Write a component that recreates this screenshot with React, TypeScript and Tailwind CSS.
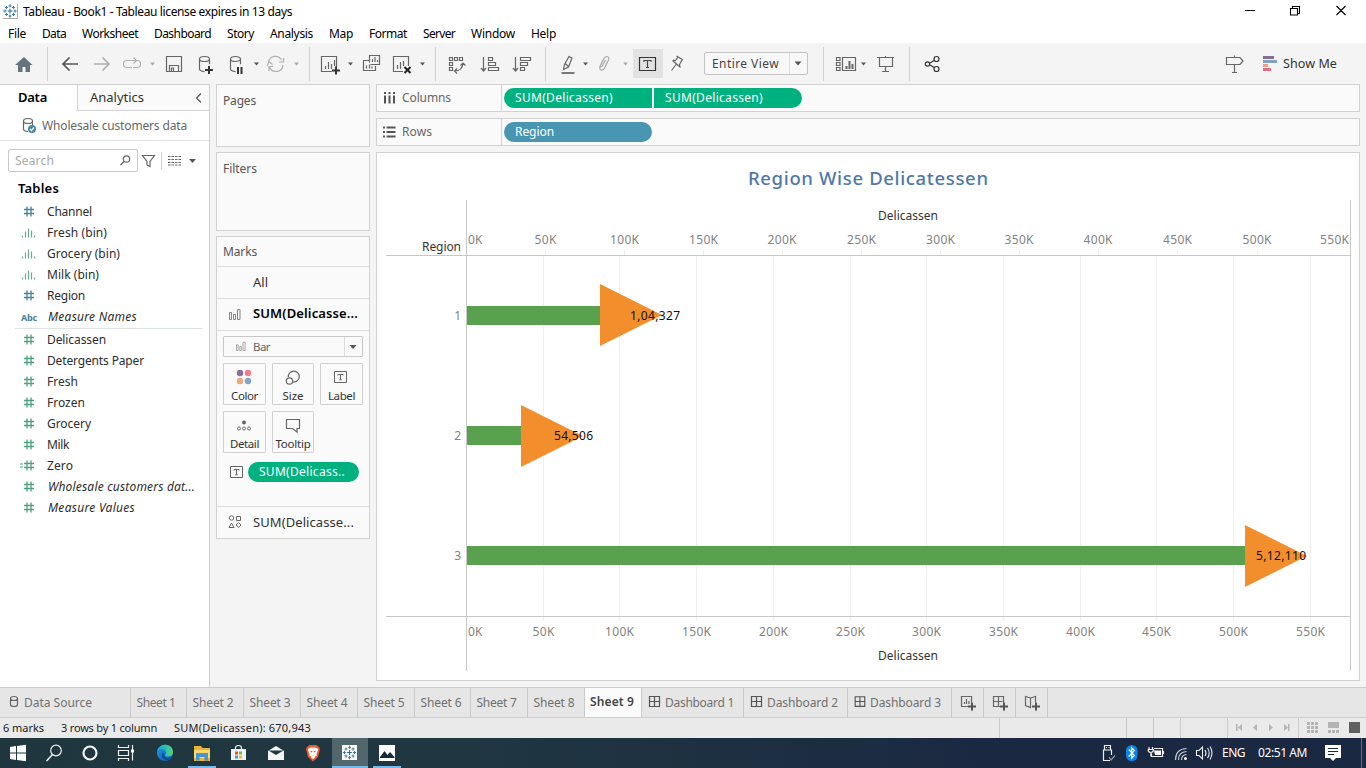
import { useLayoutEffect, useRef } from "react";
import type { ReactNode } from "react";

/** Single-line text whose tracking is adjusted to occupy a given width. */
function T({ w, c = "", children }: { w: number; c?: string; children: string }) {
  const ref = useRef<HTMLSpanElement>(null);
  useLayoutEffect(() => {
    const el = ref.current;
    if (!el) return;
    el.style.letterSpacing = "0px";
    const natural = el.getBoundingClientRect().width;
    el.style.letterSpacing = `${(w - natural) / children.length}px`;
  }, [w, children]);
  return (
    <span ref={ref} className={`inline-block shrink-0 whitespace-pre ${c}`}>
      {children}
    </span>
  );
}

/** Drawing surface using window coordinates, so neighbouring cells line up. */
function Ico({ x, y, w, h, c = "", children }: { x: number; y: number; w: number; h: number; c?: string; children?: ReactNode }) {
  return (
    <svg width={w} height={h} viewBox={`${x} ${y} ${w} ${h}`} fill="none" stroke="#666" strokeWidth="1.2" className={`block shrink-0 ${c}`}>
      {children}
    </svg>
  );
}

const Tool = ({ x, w, children }: { x: number; w: number; children?: ReactNode }) => (
  <Ico x={x} y={43} w={w} h={41}>
    {children}
  </Ico>
);
const Caret = ({ x, y = 62.5, f = "#555", s = 2.5 }: { x: number; y?: number; f?: string; s?: number }) => (
  <path d={`M${x - s} ${y}h${s * 2}l${-s} ${s + 0.5}z`} fill={f} stroke="none" />
);
const Plus = ({ x, y, f = "#333" }: { x: number; y: number; f?: string }) => (
  <path d={`M${x - 4} ${y}h8M${x} ${y - 4}v8`} stroke={f} strokeWidth="2" />
);
const Divider = ({ x }: { x: number }) => <path d={`M${x + 0.5} 47v34`} stroke="#d0d0d0" strokeWidth="1" />;

function Cylinder({ x, y, w, h }: { x: number; y: number; w: number; h: number }) {
  const r = w / 2;
  return (
    <path
      d={`M${x} ${y + 2.5}a${r} 2.5 0 0 1 ${w} 0a${r} 2.5 0 0 1 ${-w} 0v${h - 5}q0 2 ${r} 2.6M${x + w} ${y + 2.5}v${h * 0.35}`}
    />
  );
}

const TableauMark = ({ cx, cy, s }: { cx: number; cy: number; s: number }) => (
  <g transform={`translate(${cx} ${cy}) scale(${s})`} stroke="#3d7fa6" strokeWidth="1.1">
    <path d="M-2.5 0h5M0-2.5v5" stroke="#2d6a92" />
    <path d="M-1.5-5.3h3M0-7v3.4M-1.5 5.3h3M0 3.6V7M-5.3-1.5v3M-7 0h3.4M5.3-1.5v3M3.6 0H7" />
    <path d="M-5.3-3.7h3.2M-3.7-5.3v3.2M2.1-3.7h3.2M3.7-5.3v3.2M-5.3 3.7h3.2M-3.7 2.1v3.2M2.1 3.7h3.2M3.7 2.1v3.2" />
  </g>
);

const menus: [string, number, number][] = [
  ["File", 8, 18], ["Data", 42, 24], ["Worksheet", 82, 56], ["Dashboard", 154, 57], ["Story", 227, 27], ["Analysis", 270, 43],
  ["Map", 329, 24], ["Format", 369, 38], ["Server", 423, 32], ["Window", 471, 44], ["Help", 531, 25],
];

function TitleBar() {
  return (
    <div className="flex h-[22px] items-center bg-white">
      <Ico x={0} y={0} w={23} h={22}>
        <rect x="3" y="4" width="14" height="14" fill="#fff" stroke="none" />
        <path d="M17.5 4v14.5H3" stroke="#aaa" strokeWidth="1" />
        <TableauMark cx={10} cy={11} s={0.95} />
      </Ico>
      <T w={269} c="mt-[2px] font-['Noto_Sans'] text-[12px] leading-[22px] text-black">Tableau - Book1 - Tableau license expires in 13 days</T>
      <div className="flex-1" />
      <Ico x={1230} y={0} w={136} h={22}>
        <path d="M1245 10.5h10M1290.5 8.5h7v6.500h-7zM1292.500 8.500v-2h7v7h-2M1336.500 6l9 9M1345.500 6l-9 9" stroke="#000" strokeWidth="1.1" />
      </Ico>
    </div>
  );
}

function MenuBar() {
  return (
    <div className="flex h-[21px] items-start bg-white pt-px pl-2 font-['Noto_Sans'] text-[12px] text-black">
      {menus.map(([m, x, w], i) => (
        <div key={m} className="flex shrink-0" style={{ width: (menus[i + 1]?.[1] ?? x + 40) - x }}>
          <T w={w} c="leading-[21px]">{m}</T>
        </div>
      ))}
    </div>
  );
}

function Toolbar() {
  return (
    <div className="flex h-[41px] items-center bg-[#f4f4f4]">
      <Tool x={0} w={48}>
        <path d="M15 65l9-8 8.500 8h-2.500v7h-4.500v-5h-3v5H18v-7z" fill="#667482" stroke="none" />
        <Divider x={47} />
      </Tool>
      <Tool x={48} w={112}>
        <path d="M78 64H63M69.500 57.500L63 64l6.500 6.500" stroke="#555" strokeWidth="1.700" />
        <path d="M94 64h15M102.500 57.500L109 64l-6.500 6.500" stroke="#b0b0b0" strokeWidth="1.700" />
        <path d="M133 67.500h4a3.500 3.500 0 0 0 0-7M137 60.500h-10a3.500 3.500 0 0 0 0 7h5M133.500 57.500l3 3-3 3" stroke="#b0b0b0" />
        <Caret x={152.500} f="#aaa" />
      </Tool>
      <Tool x={160} w={30}>
        <path d="M166.500 56.500h15v15h-15zM169.500 71v-5.500h9V71M171.500 71v-3h2v3" />
      </Tool>
      <Tool x={190} w={120}>
        <Cylinder x={199.500} y={56.500} w={10} h={15} />
        <Plus x={209} y={70} />
        <Cylinder x={230.500} y={56.500} w={10} h={15} />
        <path d="M238 67v7M241.500 67v7" stroke="#333" strokeWidth="2" />
        <Caret x={256.500} />
        <path d="M268.500 62a7 7 0 0 1 13-2M283 65a7 7 0 0 1-13.500 2M267 66l2-4.500 3.500 3M279 62l4.500 0v-4M269 71v-4.500h4" stroke="#b0b0b0" />
        <Caret x={296.500} f="#aaa" />
        <Divider x={309} />
      </Tool>
      <Tool x={310} w={126}>
        <path d="M332 71.500h-10.500v-15h15V67M325.500 69v-3M328.500 69v-7M331.500 69v-5M334.500 66v-6" />
        <Plus x={336} y={70.500} />
        <Caret x={350.500} />
        <path d="M369.500 62.500v-7h10v9h-9M372.500 62v-3M375 62v-5M377.500 62v-2M369 60.500h-5.500v10h12v-4.500M366.500 68.500v-3M369.500 68.500v-4M372 68.500v-2" />
        <path d="M403 71.500h-9.500v-15h15V66M397.500 69v-4M400.500 69v-7M403.500 66v-5" />
        <path d="M404.500 67l6 6M410.500 67l-6 6" stroke="#222" strokeWidth="2" />
        <Caret x={422.500} />
        <Divider x={435} />
      </Tool>
      <Tool x={436} w={110}>
        <path d="M449.500 57.500h3v3h-3zM454.500 57.500h3v3h-3zM459.500 57.500h3v3h-3zM449.500 62.500h3v3h-3zM449.500 67.500h3v3h-3zM454.500 71q8 0 8.500-8M457 68.500l-2.500 2.500 2.500 2.500M460.500 65.500l2.500-2.500 2.500 2.500" />
        <path d="M483.500 57v13M481 68l2.500 3 2.500-3M488.500 57.500h4v3h-4zM488.500 62.500h7v3h-7zM488.500 67.500h10v3h-10z" />
        <path d="M515.500 57v13M513 68l2.500 3 2.500-3M520.500 57.500h10v3h-10zM520.500 62.500h7v3h-7zM520.500 67.500h4v3h-4z" />
        <Divider x={545} />
      </Tool>
      <Tool x={546} w={87}>
        <path d="M561.500 73h13" stroke="#777" strokeWidth="2" />
        <path d="M569 56.500l3 1.500-3.500 9-5 2.500 1-5zM565 63.500l3.500 3" />
        <Caret x={585.500} />
        <path d="M603 60l-3 6.500q-1 4 2.500 3.500 1.500-.5 2-2l4-8q1-3-1.500-3.500-2 0-3 2l-3.500 7q0 1.500 1 1 .8-.3 1-1l3-5.500" stroke="#aaa" />
        <Caret x={625.500} f="#aaa" />
      </Tool>
      <div className="flex h-[29px] w-[30px] shrink-0 bg-[#e2e2e2]">
        <Ico x={633} y={49} w={30} h={29}>
          <path d="M639.500 57.500h16v13h-16z" stroke="#333" />
          <path d="M644 62v-1.500h7V62M647.500 61v6.500M646 67.500h3" stroke="#444" />
        </Ico>
      </div>
      <Tool x={663} w={41}>
        <path d="M676.500 56l6.500 4M678 57l-2.500 3.500-2.500-.5M682 60l-2.500 4.500 .5 2.500M672.500 60.500l8 7M676 64.500l-4.500 6" />
      </Tool>
      <div className="flex h-[23px] w-[104px] shrink-0 items-center rounded-[2px] border border-[#c4c4c4] bg-[#f8f8f8] pl-[7px]">
        <T w={67} c="font-['Noto_Sans'] text-[12px] text-[#444]">Entire View</T>
        <div className="ml-[10px] flex h-full border-l border-[#ddd]">
          <Ico x={790} y={53} w={16} h={21}><Caret x={798} y={61.500} s={3.500} /></Ico>
        </div>
      </div>
      <Tool x={808} w={102}>
        <Divider x={823} />
        <path d="M836.500 57.500h3.500v3h-3.500zM836.500 62.500h3.500v3h-3.500zM836.500 67.500h3.500v3h-3.500zM842.500 57.500h13v13h-13z" />
        <path d="M846.500 69v-3M849.500 69v-8M852.500 69v-5" strokeWidth="2" />
        <Caret x={863.500} />
        <path d="M877 57.500h17M879.500 58v8.500h13V58M885.500 56v1M885.500 66.500V71M882 71.500h7" />
        <Divider x={909} />
      </Tool>
      <Tool x={910} w={40}>
        <g stroke="#333"><circle cx="927.500" cy="64" r="2.200" /><circle cx="936.500" cy="59" r="2.500" /><circle cx="936.500" cy="69" r="2.500" /><path d="M930 63l4-2.500M930 65l4 2.500" /></g>
      </Tool>
      <div className="flex-1" />
      <Tool x={1220} w={63}>
        <path d="M1226.500 57.500h13.500l3 3.500-3 3.500h-13.500zM1234.500 55.500v2M1234.500 64.500v7.500M1232 72.500h5" />
        <g stroke="none"><path d="M1263 56h11v3h-11z" fill="#846e94" /><path d="M1263 60h14v3h-14z" fill="#83a0c0" /><path d="M1263 64h5v3h-5z" fill="#eda27e" /><path d="M1263 68h8v3h-8z" fill="#e46c82" /></g>
      </Tool>
      <T w={54} c="mt-[2px] mr-[29px] font-['Noto_Sans'] text-[12.5px] text-[#333]">Show Me</T>
    </div>
  );
}

type Field = { k: "hash" | "bin" | "abc" | "calc"; n: string; w: number; dim?: boolean; it?: boolean };
const dims: Field[] = [
  { k: "hash", n: "Channel", w: 45, dim: true },
  { k: "bin", n: "Fresh (bin)", w: 60 },
  { k: "bin", n: "Grocery (bin)", w: 73 },
  { k: "bin", n: "Milk (bin)", w: 52 },
  { k: "hash", n: "Region", w: 38, dim: true },
  { k: "abc", n: "Measure Names", w: 90, it: true },
];
const measures: Field[] = [
  { k: "hash", n: "Delicassen", w: 59 },
  { k: "hash", n: "Detergents Paper", w: 97 },
  { k: "hash", n: "Fresh", w: 31 },
  { k: "hash", n: "Frozen", w: 38 },
  { k: "hash", n: "Grocery", w: 44 },
  { k: "hash", n: "Milk", w: 22 },
  { k: "calc", n: "Zero", w: 26 },
  { k: "hash", n: "Wholesale customers dat...", w: 148, it: true },
  { k: "hash", n: "Measure Values", w: 88, it: true },
];

function FieldRow({ f }: { f: Field }) {
  const col = f.dim ? "#4a8299" : "#4f9f80";
  return (
    <div className="flex h-[21px] items-center">
      {f.k === "abc" ? (
        <span className="flex w-[47px] pl-[21px]"><T w={16} c="mt-[2px] font-['Noto_Sans'] text-[9px] font-bold text-[#4a7d94]">Abc</T></span>
      ) : (
        <Ico x={0} y={0} w={47} h={21}>
          {f.k === "bin" ? (
            <path d="M22.500 15.500v-2M25.500 15.500v-6M28.500 15.500v-9M31.500 15.500v-7M34.500 15.500v-2" stroke="#68aa90" strokeWidth="1.200" />
          ) : (
            <path d="M24 8.500h10M24 12.500h10M27 5.500v10M31 5.500v10" stroke={col} strokeWidth="1.300" />
          )}
          {f.k === "calc" && <path d="M20 9h3M20 12h3" stroke={col} strokeWidth="1" />}
        </Ico>
      )}
      <T w={f.w} c={f.it ? "pl-px text-[12px] leading-[21px] italic" : "text-[12px] leading-[21px]"}>{f.n}</T>
    </div>
  );
}

function DataPane() {
  return (
    <div className="flex w-[210px] shrink-0 flex-col border-t border-r border-[#d0d0d0] bg-white font-['Noto_Sans'] text-[#2d2d2d]">
      <div className="flex h-[26px] shrink-0">
        <div className="flex w-[77px] items-center pl-[18px]"><T w={29} c="text-[13px] font-semibold text-black">Data</T></div>
        <div className="flex flex-1 items-center border-b border-l border-[#d4d4d4] bg-[#fafafa] pl-[12px]">
          <T w={54} c="text-[13px] text-[#333]">Analytics</T>
          <div className="flex-1" />
          <Ico x={190} y={86} w={19} h={22}><path d="M201 92.500l-4.500 4.500 4.500 4.500" stroke="#555" /></Ico>
        </div>
      </div>
      <div className="flex h-[30px] shrink-0 items-center border-b border-[#e0e0e0]">
        <Ico x={0} y={111} w={42} h={29}>
          <Cylinder x={23.500} y={118.500} w={9} h={13} />
          <circle cx="32" cy="129" r="4" fill="#4388a8" stroke="none" />
          <path d="M30 129l1.500 1.500 2.500-3" stroke="#fff" />
        </Ico>
        <T w={145} c="text-[12px] text-[#666]">Wholesale customers data</T>
      </div>
      <div className="flex h-[39px] shrink-0 items-center pl-2">
        <div className="flex h-[23px] w-[130px] items-center rounded-[2px] border border-[#c8c8c8] pl-[6px]">
          <T w={39} c="mt-px text-[12px] text-[#aaa]">Search</T>
          <div className="flex-1" />
          <Ico x={118} y={150} w={19} h={21}><circle cx="126.500" cy="159" r="3.200" /><path d="M124 161.500l-3.500 3.500" strokeWidth="1.500" /></Ico>
        </div>
        <Ico x={138} y={149} w={70} h={22}>
          <path d="M142.500 154.500h12l-4.500 6v5l-3-1.500v-3.500z" />
          <path d="M161.500 151v17" stroke="#ccc" strokeWidth="1" />
          <path d="M168 155.500h13M168 158.500h13M168 161.500h13M168 164h13" strokeDasharray="2.500 1" />
          <Caret x={192.500} y={158} s={3.500} />
        </Ico>
      </div>
      <div className="flex h-[21px] shrink-0 items-center pl-[18px]"><T w={41} c="mt-[-3px] text-[13px] font-semibold text-black">Tables</T></div>
      {dims.map((f) => <FieldRow key={f.n} f={f} />)}
      <div className="mr-[6px] ml-[15px] h-[2px] border-b border-[#dde3e0]" />
      {measures.map((f) => <FieldRow key={f.n} f={f} />)}
    </div>
  );
}

const BarsGlyph = ({ x, y, s = "#888" }: { x: number; y: number; s?: string }) => (
  <path d={`M${x} ${y - 7}h2v7h-2zM${x + 4} ${y - 5}h2v5h-2zM${x + 8} ${y - 10}h2.500v10h-2.500z`} stroke={s} strokeWidth="1" />
);
const LabelGlyph = ({ x, y }: { x: number; y: number }) => (
  <path d={`M${x} ${y}h12v11h-12zM${x + 3.5} ${y + 4}v-1h5v1M${x + 6} ${y + 3}v5M${x + 4.8} ${y + 8.300}h2.500`} strokeWidth="1" />
);

function MarkButton({ n, w, wide, children }: { n: string; w: number; wide?: boolean; children: ReactNode }) {
  return (
    <div className={`flex h-[42px] flex-col items-center rounded-[1px] border border-[#d0d0d0] bg-[#fafafa] ${wide ? "w-[43px]" : "w-[42px]"}`}>
      <svg width={wide ? 41 : 40} height="24" viewBox={wide ? "0.5 0 41 24" : "0 0 40 24"} fill="none" stroke="#666" strokeWidth="1.2" className="shrink-0">{children}</svg>
      <T w={w} c="text-[11.5px] leading-[16px] text-[#333]">{n}</T>
    </div>
  );
}

function Cards() {
  const card = "flex flex-col border border-[#d2d2d2] bg-[#fafafa]";
  return (
    <div className="ml-[6px] flex w-[154px] shrink-0 flex-col gap-[5px] font-['Noto_Sans'] text-[#555]">
      <div className={`${card} h-[63px] items-start pt-[6px] pl-[6px]`}><T w={33} c="text-[12px] leading-[19px]">Pages</T></div>
      <div className={`${card} h-[79px] items-start pt-[6px] pl-[6px]`}><T w={34} c="text-[12px] leading-[19px]">Filters</T></div>
      <div className={`${card} h-[303px]`}>
        <div className="flex h-[30px] items-center border-b border-[#ddd] pl-[6px]"><T w={34} c="text-[12px]">Marks</T></div>
        <div className="flex h-[32px] items-center border-b border-[#ddd] pl-[36px]"><T w={15} c="text-[13px] text-[#333]">All</T></div>
        <div className="flex h-[32px] items-center border-b border-[#ddd]">
          <Ico x={217} y={299} w={36} h={31}><BarsGlyph x={229.500} y={319.500} /></Ico>
          <T w={105} c="mt-[-2px] text-[13px] font-semibold text-black">SUM(Delicasse...</T>
        </div>
        <div className="flex h-[176px] flex-col border-b border-[#ddd] px-[6px] pt-[5px]">
          <div className="flex h-[21px] w-[140px] items-center rounded-[1px] border border-[#c8c8c8]">
            <Ico x={224} y={337} w={29} h={19}><g transform="translate(236.500 350.500) scale(.82)"><BarsGlyph x={0} y={0} s="#999" /></g></Ico>
            <T w={17} c="text-[11.5px] text-[#666]">Bar</T>
            <div className="flex-1" />
            <Ico x={344} y={337} w={18} h={19}><path d="M344.500 337v20" stroke="#ddd" strokeWidth="1" /><Caret x={353} y={345} s={3.500} /></Ico>
          </div>
          <div className="mt-[6px] flex gap-x-[6px]">
            <MarkButton wide n="Color" w={27}>
              <g stroke="none"><circle cx="16.500" cy="9" r="3.200" fill="#87709a" /><circle cx="24.500" cy="9" r="3.200" fill="#f47c88" /><circle cx="16.500" cy="17" r="3.200" fill="#eda67d" /><circle cx="24.500" cy="17" r="3.200" fill="#82a5c6" /></g>
            </MarkButton>
            <MarkButton n="Size" w={21}><path d="M15.300 13a5.500 5.500 0 1 1 4.700 5" /><circle cx="16.500" cy="17" r="3.200" /></MarkButton>
            <MarkButton wide n="Label" w={27}><LabelGlyph x={14} y={7.500} /></MarkButton>
          </div>
          <div className="mt-[6px] flex gap-x-[6px]">
            <MarkButton wide n="Detail" w={29}>
              <circle cx="20.500" cy="10.500" r="2" fill="#666" stroke="none" /><circle cx="15.500" cy="16.500" r="1.500" strokeWidth="1" /><circle cx="20.500" cy="16.500" r="1.500" strokeWidth="1" /><circle cx="25.500" cy="16.500" r="1.500" strokeWidth="1" />
            </MarkButton>
            <MarkButton n="Tooltip" w={35}><path d="M13.500 7.500h13v9h-2.500v3.500l-4.500-3.500h-6z" /></MarkButton>
          </div>
          <div className="mt-[9px] flex h-[20px] items-center">
            <Ico x={223} y={462} w={25} h={20}><LabelGlyph x={230.500} y={466.500} /></Ico>
            <div className="flex h-[20px] w-[111px] items-center rounded-full bg-[#00b180] pl-[11px] text-white"><T w={86} c="text-[12px] leading-[20px]">SUM(Delicass..</T></div>
          </div>
        </div>
        <div className="flex h-[31px] items-center">
          <Ico x={217} y={507} w={36} h={31}>
            <g strokeWidth="1"><circle cx="231.500" cy="518" r="2.200" /><path d="M236.500 516.500h4v4h-4zM231.500 523l2.500 4.500h-5zM238.500 522.500l2.500 2.500-2.500 2.500-2.500-2.500z" /></g>
          </Ico>
          <T w={101} c="text-[13px] text-[#333]">SUM(Delicasse...</T>
        </div>
      </div>
    </div>
  );
}

function Shelf({ n, w, icon, children }: { n: string; w: number; icon: ReactNode; children: ReactNode }) {
  return (
    <div className="flex h-[28px] shrink-0 items-center border border-[#d2d2d2] bg-[#fafafa]">
      <div className="flex h-full w-[125px] items-center border-r border-[#d2d2d2]">
        <svg width="25" height="26" viewBox="0 0 25 26" stroke="#555" strokeWidth="2" fill="none">{icon}</svg>
        <T w={w} c="text-[12px] leading-[20px] text-[#666]">{n}</T>
      </div>
      <div className="flex gap-[2px] pl-[2px] text-white">{children}</div>
    </div>
  );
}

const topTicks = [545.5, 624.5, 703.5, 782, 861.5, 940.5, 1019, 1098, 1177.500, 1257];
const lowTicks = [543.5, 619.5, 696.5, 773.5, 850.5, 926.5, 1003.5, 1080.5, 1156.5, 1233.5, 1310.500];
const arrows = [
  { y: 315.5, tip: 315, head: 600, label: "1,04,327", lx: 630, lw: 50, row: "1" },
  { y: 435.5, tip: 436, head: 521, label: "54,506", lx: 554, lw: 39, row: "2" },
  { y: 555.5, tip: 556, head: 1245, label: "5,12,110", lx: 1256, lw: 50, row: "3" },
];

function Chart() {
  return (
    <svg width="982" height="527" viewBox="377 153 982 527" className="block font-['Noto_Sans'] text-[12px]">
      <text x="748" y="185" textLength="240" fontSize="18.5" fontWeight="500" fill="#4e79a7">Region Wise Delicatessen</text>
      <g stroke="#eeeeee">
        {topTicks.map((x) => <path key={x} d={`M${Math.floor(x) + 0.5} 250v5`} />)}
        {lowTicks.map((x) => <path key={x} d={`M${x} 256v364`} />)}
      </g>
      <path d="M386 255.500h965M386 616.500h965M466.500 200v471M1350.500 200v471" stroke="#c8c8c8" fill="none" />
      <g fill="#828282">
        <text x="468" y="244" textLength="14.500">0K</text>
        {topTicks.map((x, i) => { const w = i ? 29 : 22; return <text key={x} x={x - w / 2} y="244" textLength={w}>{`${(i + 1) * 50}K`}</text>; })}
        <text x="1320" y="244" textLength="29">550K</text>
        <text x="468" y="636" textLength="14.500">0K</text>
        {lowTicks.map((x, i) => { const w = i ? 29 : 22; return <text key={x} x={x - w / 2} y="636" textLength={w}>{`${(i + 1) * 50}K`}</text>; })}
      </g>
      <g fill="#333">
        <text x="878" y="220" textLength="60">Delicassen</text>
        <text x="878" y="660" textLength="60">Delicassen</text>
        <text x="422" y="251" textLength="39">Region</text>
      </g>
      {arrows.map((a) => (
        <g key={a.row}>
          <text x="461" y={a.y + 4.500} textAnchor="end" fill="#828282">{a.row}</text>
          <rect x="467" y={a.y - 9.500} width={a.head - 467} height="19" fill="#59a14f" />
          <path d={`M${a.head} ${a.tip - 31}l62 31-62 31z`} fill="#f28e2b" />
          <text x={a.lx} y={a.y + 4.500} textLength={a.lw} fill="#111">{a.label}</text>
        </g>
      ))}
    </svg>
  );
}

function Workspace() {
  return (
    <div className="mr-[6px] ml-[6px] flex flex-1 flex-col gap-[6px] font-['Noto_Sans']">
      <Shelf n="Columns" w={49} icon={<path d="M8 7v2M12.500 7v2M17 7v2M8 10.500v8M12.500 10.500v8M17 10.500v8" />}>
        <div className="flex h-[20px] w-[148px] items-center rounded-l-full bg-[#00b180] pl-[11px]"><T w={98} c="text-[12px] leading-[20px]">SUM(Delicassen)</T></div>
        <div className="flex h-[20px] w-[148px] items-center rounded-r-full bg-[#00b180] pl-[11px]"><T w={98} c="text-[12px] leading-[20px]">SUM(Delicassen)</T></div>
      </Shelf>
      <Shelf n="Rows" w={30} icon={<path d="M6 8.500h2M6 13h2M6 17.500h2M9.500 8.500h9M9.500 13h9M9.500 17.500h9" />}>
        <div className="flex h-[20px] w-[148px] items-center rounded-full bg-[#4996b2] pl-[11px]"><T w={39} c="text-[12px] leading-[20px]">Region</T></div>
      </Shelf>
      <div className="h-[529px] shrink-0 border border-[#d2d2d2] bg-white"><Chart /></div>
    </div>
  );
}

const sheets: [string, number, number][] = [
  ["Sheet 1", 56, 39], ["Sheet 2", 57, 41], ["Sheet 3", 57, 41], ["Sheet 4", 57, 41], ["Sheet 5", 57, 41],
  ["Sheet 6", 56, 41], ["Sheet 7", 57, 40], ["Sheet 8", 57, 41], ["Sheet 9", 57, 44],
];

function SheetTabs() {
  return (
    <div className="flex h-[31px] shrink-0 border-t border-b border-[#cdcdcd] bg-[#e6e6e6] font-['Noto_Sans'] text-[12px] text-[#707070]">
      <div className="flex w-[131px] shrink-0 items-center border-r border-[#cacaca]">
        <Ico x={0} y={688} w={24} h={29}><path d="M10.500 698.500a3.500 2 0 0 1 7 0v6a3.500 2 0 0 1-7 0zM10.500 698.500a3.500 2 0 0 0 7 0" /></Ico>
        <T w={68}>Data Source</T>
      </div>
      {sheets.map(([n, w, tw]) => (
        <div key={n} style={{ width: w }} className={`flex shrink-0 items-center border-r border-[#cacaca] ${n === "Sheet 9" ? "bg-[#fbfbfb] pb-[2px] pl-[5px] font-semibold text-[#444]" : "pl-[5.500px]"}`}>
          <T w={tw}>{n}</T>
        </div>
      ))}
      {[102, 104, 104].map((w, i) => (
        <div key={i} style={{ width: w }} className="flex shrink-0 items-center border-r border-[#cacaca]">
          <svg width={i === 2 ? 22 : 23} height="29" viewBox="0 0 23 29" fill="none" stroke="#555" strokeWidth="1.2" className="shrink-0"><path d="M7.500 8.500h10v10h-10zM12.500 8.500v10M7.500 13.500h10" /></svg>
          <T w={i ? 71 : 69}>{`Dashboard ${i + 1}`}</T>
        </div>
      ))}
      <Ico x={952} y={688} w={100} h={29}>
        <path d="M983.500 688v29M1015.500 688v29M1047.500 688v29" stroke="#cacaca" strokeWidth="1" />
        <path d="M970 706.500h-8.500v-10h10v6M964.500 704v-2M966.500 704v-5M969 704v-3" />
        <path d="M1001 706.500h-7.500v-10h10v6M998.500 696.500v10M993.500 701.500h9" />
        <path d="M1030.500 698l-5-1.500v9l5 2zv8M1030.500 698l5-1.500v6" />
        <Plus x={972} y={706.500} f="#555" /><Plus x={1004} y={706.500} f="#555" /><Plus x={1036} y={706.500} f="#555" />
      </Ico>
    </div>
  );
}

function StatusBar() {
  return (
    <div className="flex h-[20px] shrink-0 items-center bg-[#eaeaea] pl-[3px] font-['Noto_Sans'] text-[11px] text-[#222]">
      <T w={41}>6 marks</T>
      <T w={96} c="ml-[17px]">3 rows by 1 column</T>
      <T w={137} c="ml-[17px]">SUM(Delicassen): 670,943</T>
      <div className="flex-1" />
      <Ico x={990} y={718} w={376} h={20}>
        <path d="M999.500 718v20M1126.500 718v20M1153.500 718v20M1180.500 718v20M1227.500 718v20M1298.500 718v20" stroke="#cacaca" strokeWidth="1" />
        <g fill="#b4b4b4" stroke="none">
          <path d="M1236 724h1.500v7h-1.500zM1242 724v7l-4-3.500zM1257 724v7l-4-3.500zM1269 724v7l4-3.500zM1284 724v7l4-3.500zM1288 724h1.500v7h-1.500z" />
          {[0, 4, 8].map((y) => [0, 4, 8].map((x) => <rect key={`${x}-${y}`} x={1307 + x} y={722 + y} width="3" height="3" />))}
          <path d="M1328 722h11v6h-11zM1328 730h3v3h-3zM1332 730h3v3h-3zM1336 730h3v3h-3z" />
          <path d="M1349 722h11v11h-11z" fill="#606060" />
        </g>
      </Ico>
    </div>
  );
}

function TaskBar() {
  return (
    <div className="flex h-[30px] shrink-0 items-center bg-linear-to-r from-[#20363f] via-[#203641] via-35% to-[#1a2841] to-75%">
      <Ico x={0} y={738} w={410} h={30}>
        <defs>
          <linearGradient id="edge" x1="0" y1="0" x2="1" y2="1"><stop offset="0" stopColor="#1da4d8" /><stop offset=".5" stopColor="#1677cf" /><stop offset="1" stopColor="#0c59a4" /></linearGradient>
          <linearGradient id="edgeTop" x1="0" y1="0" x2="1" y2="0"><stop offset="0" stopColor="#229fd4" /><stop offset=".6" stopColor="#2dc2b2" /><stop offset="1" stopColor="#67d35f" /></linearGradient>
        </defs>
        <path d="M10 747l6-1v6.500h-6zM17 746l9-1.200v7.700h-9zM10 753.500h6v6.500l-6-1zM17 753.500h9v7.700l-9-1.200z" fill="#fff" stroke="none" />
        <circle cx="56" cy="750.500" r="5.300" stroke="#eee" /><path d="M52.500 754.500l-6 6.500" stroke="#eee" strokeWidth="1.500" />
        <circle cx="90" cy="753" r="6.500" stroke="#f4f4f4" strokeWidth="2.200" />
        <path d="M118.500 745v2.500h10V745M118.500 750.500h10v5h-10zM118.500 761v-2.500h10v2.500M132.500 745v15.500" stroke="#eee" /><path d="M131 749.500h3v3h-3z" fill="#fff" stroke="none" />
        <g stroke="none">
          <circle cx="165" cy="753" r="8" fill="url(#edge)" />
          <path d="M157 752q1-7 8-7.500 8 .5 8 8-.5 4-5 4-3 0-3-1.500 1.500-1.500 1-3-1-3-4-3-3.500 0-5 3z" fill="url(#edgeTop)" />
          <path d="M162 753q-1.500 6 5 7.300 3 .2 4.500-1.800-7 .5-7.500-5z" fill="#104d91" />
          <path d="M188 766h28v2h-28zM373 766h28v2h-28z" fill="#76b9ed" />
          <path d="M194 746h7l1.500 2h7.500v13h-16z" fill="#e9b33c" /><path d="M194 750h16v8h-16z" fill="#ffd86d" /><path d="M196 753h12v7.500h-3.500v-3.500h-5v3.500H196z" fill="#4196d6" />
          <path d="M231 749h15v11h-15z" fill="#f2f2f2" />
          <path d="M235 751.500h3v3h-3z" fill="#f05326" /><path d="M239 751.500h3v3h-3z" fill="#7cbb39" /><path d="M235 755.500h3v3h-3z" fill="#2aa0e3" /><path d="M239 755.500h3v3h-3z" fill="#f7b91f" />
          <path d="M268 751l8-5 8 5v9h-16z" fill="#f4f4f4" /><path d="M268.500 750.500h15L276 755z" fill="#20363f" />
          <path d="M307 747l2.500-2h7l2.500 2 1 2-2 8-5 4.500-5-4.500-2-8z" fill="#f05a2b" />
          <path d="M308.500 748.500l2.500-1h4l2.500 1 .5 1.500-1.500 4 .5 1.500-2 1-.5 1.500-1.500 1-1.500-1-.5-1.500-2-1 .5-1.500-1.500-4z" fill="#fff" /><path d="M310.500 750.500l2 .7-.5 1.300-1.500-.5zM315.500 750.500l-2 .7 .5 1.300 1.500-.5zM312.300 755.500h1.400l-.7 1z" fill="#f05a2b" />
          <path d="M332 738h36v28h-36z" fill="#52666e" /><path d="M332 766h36v2h-36z" fill="#76b9ed" />
          <path d="M342 745h15v15h-15z" fill="#fff" />
          <path d="M379 745h16v16h-16z" fill="#fff" /><path d="M380 757l4.500-6 3 4 2.500-3 4.500 5v1H380z" fill="#172b34" />
        </g>
        <path d="M235.500 749v-1q0-2.500 3-2.500t3 2.500v1" stroke="#eee" />
        <TableauMark cx={349.500} cy={752.500} s={0.95} />
      </Ico>
      <div className="flex-1" />
      <Ico x={1095} y={738} w={127} h={30}>
        <g stroke="#eee">
          <path d="M1104.500 749.500v-4h6v4M1106 747.500h1M1108.500 747.500h1M1110 760.500h-6.500v-10.500h8v5" />
          <path d="M1109 757l2 3 4-4.500" stroke="#999" />
          <rect x="1126" y="745" width="11.500" height="16" rx="5.500" fill="#0a84ea" stroke="none" />
          <path d="M1128.800 749.500l5.500 6-2.700 2.800v-10.600l2.700 2.800-5.500 6" stroke="#fff" />
          <path d="M1154 748.500h8.500v8h-11v-3M1149 747v2M1152.500 747v2M1148 749.500h5.500q0 3-2.700 3t-2.700-3M1150.800 752.500v4" /><path d="M1154 750.500h7v4.500h-6z" fill="#fff" stroke="none" /><path d="M1163.500 751v3" />
          <path d="M1175.500 760q0-11 11-11.500M1178.500 760q0-8 8-8.500M1181.500 760q0-5 5-5.500" stroke="#ccc" /><circle cx="1185.500" cy="758.500" r="1.500" fill="#fff" stroke="none" />
          <path d="M1196.500 750.500h2.500l3.500-3.500v12l-3.500-3.500h-2.500zM1205 750q2 3 0 6M1207.500 748q3.500 5 0 10M1210 746.500q4 6.500 0 13" strokeWidth="1.100" />
        </g>
      </Ico>
      <T w={23} c="font-['Noto_Sans'] text-[12px] text-white">ENG</T>
      <T w={49} c="mr-px ml-[13px] font-['Noto_Sans'] text-[12px] text-white">02:51 AM</T>
      <Ico x={1308} y={738} w={58} h={30}>
        <path d="M1325 745h16v13h-5l-3 3-3-3h-5z" fill="#fff" stroke="none" /><path d="M1328 748.500h10M1328 751.500h10M1328 754.500h6" stroke="#1a2841" strokeWidth="1" />
        <path d="M1361.500 738v30" stroke="#65707f" strokeWidth="1" />
      </Ico>
    </div>
  );
}

export default function App() {
  return (
    <div className="flex h-[768px] w-[1366px] flex-col overflow-hidden bg-[#f4f4f4]">
      <TitleBar />
      <MenuBar />
      <Toolbar />
      <div className="flex h-[603px] shrink-0">
        <DataPane />
        <Cards />
        <Workspace />
      </div>
      <SheetTabs />
      <StatusBar />
      <TaskBar />
    </div>
  );
}
